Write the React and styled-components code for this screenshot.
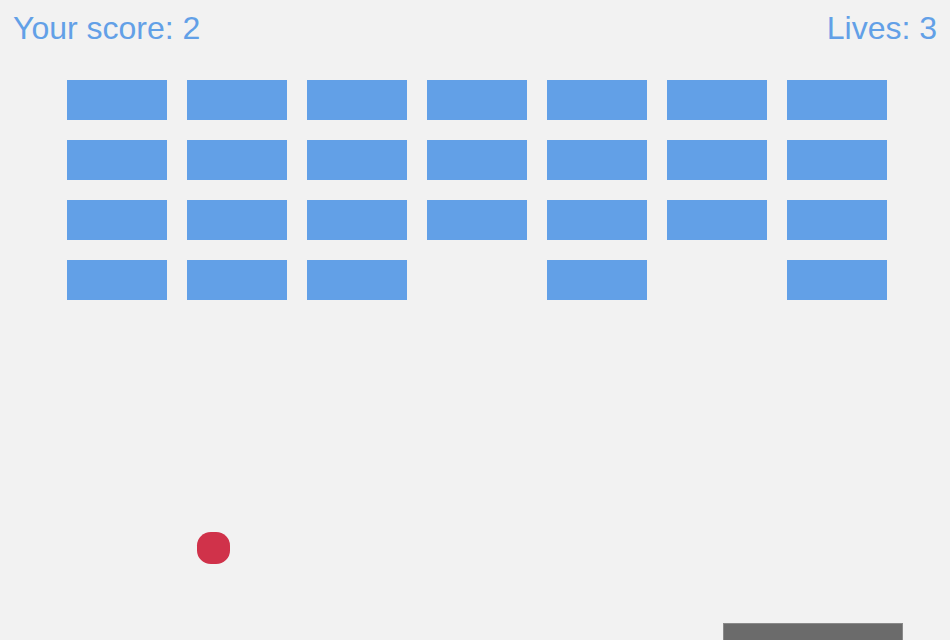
import styled, { createGlobalStyle } from "styled-components";

const GlobalStyle = createGlobalStyle`
  html, body {
    margin: 0;
    padding: 0;
    background: #f2f2f2;
  }
  body {
    font-family: "Liberation Sans", Arial, sans-serif;
  }
`;

// 1 = brick still standing, 0 = already hit
const bricks = [
  [1, 1, 1, 1, 1, 1, 1],
  [1, 1, 1, 1, 1, 1, 1],
  [1, 1, 1, 1, 1, 1, 1],
  [1, 1, 1, 0, 1, 0, 1],
];

const Board = styled.main`
  position: relative;
  width: 950px;
  height: 640px;
  overflow: hidden;
  background: #f2f2f2;
`;

const Hud = styled.header`
  display: flex;
  justify-content: space-between;
  padding: 10px 13px 0;
  height: 36px;
  font-size: 32px;
  line-height: 36px;
  color: #62a0e7;
`;

const Wall = styled.section`
  display: grid;
  grid-template-columns: repeat(7, 100px);
  grid-auto-rows: 40px;
  gap: 20px;
  margin: 34px 0 0 67px;
`;

const Brick = styled.div`
  background: ${(p) => (p.$alive ? "#62a0e7" : "transparent")};
`;

const Ball = styled.div`
  position: absolute;
  left: 197px;
  top: 532px;
  width: 33px;
  height: 32px;
  border-radius: 42%;
  background: #d0324a;
`;

const Paddle = styled.div`
  position: absolute;
  left: 723px;
  top: 623px;
  width: 180px;
  height: 20px;
  background: #6b6b6b;
  box-shadow: inset 0 0 0 1px #8a8a8a;
`;

export default function App() {
  return (
    <Board>
      <GlobalStyle />
      <Hud>
        <span>Your score: 2</span>
        <span>Lives: 3</span>
      </Hud>
      <Wall>
        {bricks.map((row, r) =>
          row.map((alive, c) => <Brick key={`${r}-${c}`} $alive={alive} />)
        )}
      </Wall>
      <Ball />
      <Paddle />
    </Board>
  );
}
